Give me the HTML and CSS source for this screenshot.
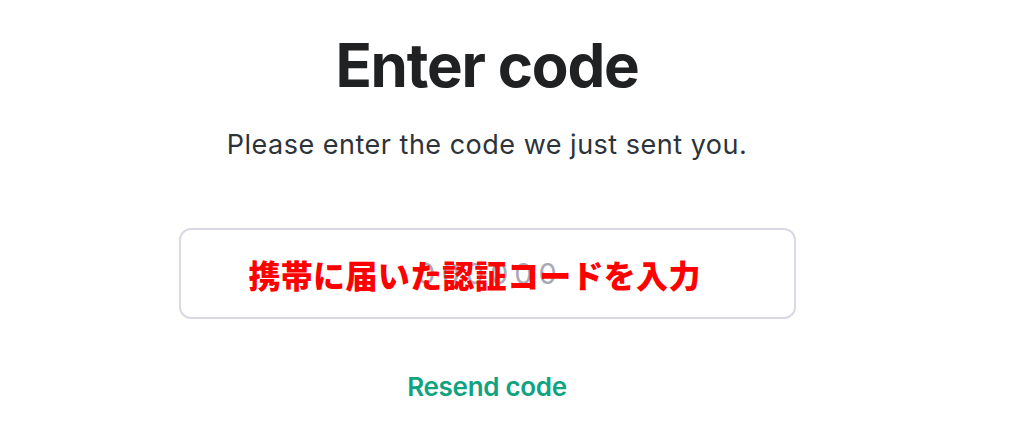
FILE: index.html
```html
<!DOCTYPE html>
<html lang="en">
<head>
<meta charset="utf-8">
<link rel="stylesheet" href="styles.css">
</head>
<body>
<main class="page">
  <h1 class="title">Enter code</h1>
  <p class="subtitle">Please enter the code we just sent you.</p>
  <div class="field">
    <div class="input"><span class="placeholder">000000</span></div>
    <span class="note">携帯に届いた認証コードを入力</span>
  </div>
  <a class="resend">Resend code</a>
</main>
</body>
</html>
```
FILE: styles.css
```css
html, body {
  margin: 0;
  padding: 0;
  background: #ffffff;
}
.page {
  width: 974px;
  height: 440px;
  display: flex;
  flex-direction: column;
  align-items: center;
  font-family: Inter, "Noto Sans", sans-serif;
}
.title {
  margin: 27px 0 0 0;
  font-size: 60px;
  font-weight: 700;
  line-height: 76px;
  color: #202123;
  letter-spacing: -1.2px;
}
.subtitle {
  margin: 25px 0 0 0;
  font-size: 27px;
  line-height: 34px;
  color: #2d333a;
  font-weight: 400;
  letter-spacing: 0.5px;
}
.field {
  position: relative;
  margin: 66px 0 0 0;
  width: 617px;
}
.input {
  box-sizing: border-box;
  height: 91px;
  border: 2px solid #d9d9e3;
  border-radius: 12px;
  display: flex;
  align-items: center;
  justify-content: center;
}
.placeholder {
  font-size: 29px;
  letter-spacing: 6px;
  padding-left: 6px;
  color: #a9a9b8;
}
.note {
  position: absolute;
  left: 70px;
  top: 24px;
  font-family: "Noto Sans CJK JP", sans-serif;
  font-weight: 900;
  font-size: 32px;
  line-height: 44px;
  color: #ff0000;
  letter-spacing: 0.3px;
}
.resend {
  margin-top: 52px;
  font-size: 26px;
  font-weight: 600;
  line-height: 32px;
  color: #10a37f;
  letter-spacing: -0.3px;
}
```
